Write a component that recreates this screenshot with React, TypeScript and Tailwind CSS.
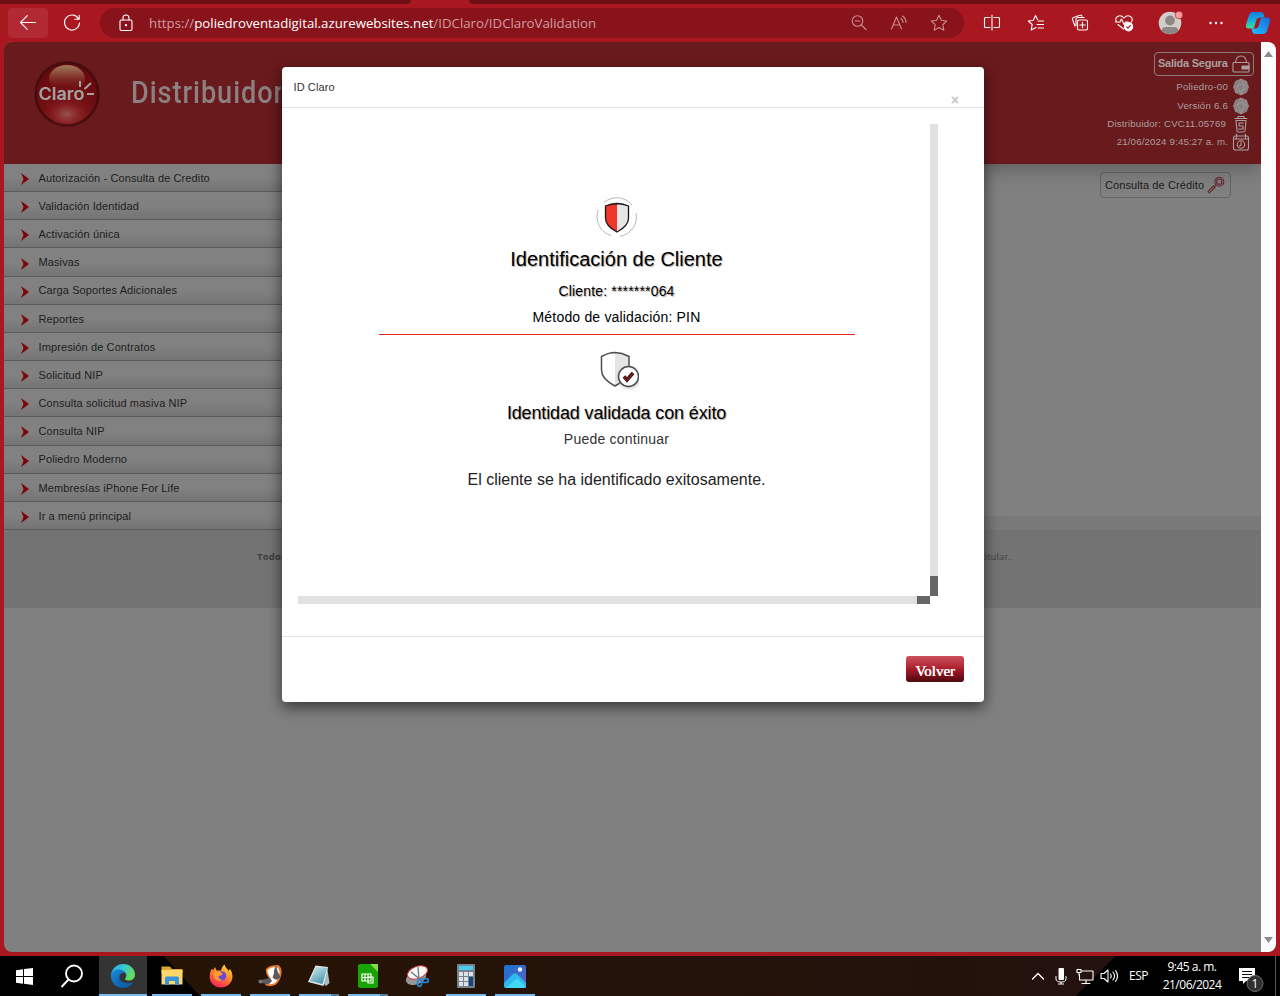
import React from "react";

const menu = [
  "Autorización - Consulta de Credito",
  "Validación Identidad",
  "Activación única",
  "Masivas",
  "Carga Soportes Adicionales",
  "Reportes",
  "Impresión de Contratos",
  "Solicitud NIP",
  "Consulta solicitud masiva NIP",
  "Consulta NIP",
  "Poliedro Moderno",
  "Membresías iPhone For Life",
  "Ir a menú principal",
];

type IconProps = { className?: string; children: React.ReactNode; box?: string };

function Line({ className = "", children, box = "0 0 20 20" }: IconProps) {
  return (
    <svg viewBox={box} fill="none" stroke="currentColor" strokeWidth="1.1" strokeLinecap="round" strokeLinejoin="round" className={`shrink-0 ${className}`}>
      {children}
    </svg>
  );
}

function TabStrip() {
  return (
    <div className="flex h-1 bg-[#a91720]">
      <div className="h-full w-[411px] rounded-br-[4px] bg-[#6e0f15]" />
      <div className="w-[58px]" />
      <div className="h-full flex-1 rounded-bl-[4px] bg-[#6e0f15]" />
    </div>
  );
}

function Toolbar() {
  return (
    <div className="flex h-[38px] items-start bg-[#a91720] pt-1 pl-2 text-white">
      <div className="flex h-[30px] w-10 items-center justify-center rounded bg-[#b12a33]">
        <Line className="size-5">
          <path d="M17.5 9.500H2.500M9.300 2.700L2.500 9.500L9.300 16.300" />
        </Line>
      </div>
      <div className="ml-[14px] flex h-[30px] w-5 items-center">
        <Line className="size-5">
          <path d="M16.400 5.600A7.500 7.500 0 1 0 17.500 10M17.200 2.300V6.300H12.800" />
        </Line>
      </div>
      <div className="ml-[18px] flex h-[30px] w-[864px] items-center rounded-full bg-[#89131b] pr-[15px] pl-4">
        <Line className="size-5">
          <rect x="4" y="7" width="12" height="10.500" rx="1.500" />
          <path d="M7 7V5a3 3 0 0 1 6 0v2" />
          <circle cx="10" cy="12.200" r=".6" fill="currentColor" />
        </Line>
        <div className="ml-[13px] flex-1 pt-px font-['Open_Sans',sans-serif] text-[13.250px] whitespace-nowrap text-[#cf9da1]">
          https://<span className="text-white">poliedroventadigital.azurewebsites.net</span>/IDClaro/IDClaroValidation
        </div>
        <div className="flex items-center gap-5 text-[#c78e92]">
          <Line className="size-5">
            <circle cx="8.500" cy="8" r="5.300" />
            <path d="M12.400 12L17 16.500M6 8h5" />
          </Line>
          <Line className="size-5">
            <path d="M2.500 16L7.500 4L12.500 16M4.200 12H10.800M12 5.500a5 5 0 0 1 2 4M13.500 3a8 8 0 0 1 3.500 6.500" />
          </Line>
          <Line className="size-5">
            <path d="M10 2.300l2.400 5 5.300.7-3.900 3.700 1 5.500L10 14.500l-4.800 2.700 1-5.500L2.300 8l5.300-.7z" />
          </Line>
        </div>
      </div>
      <div className="ml-[18px] flex h-[30px] flex-1 items-center">
        <Line className="size-5">
          <path d="M8 4.500H3.500a1 1 0 0 0-1 1v8a1 1 0 0 0 1 1H8M12 4.500h4.500a1 1 0 0 1 1 1v8a1 1 0 0 1-1 1H12M10 2v15" />
        </Line>
        <Line className="ml-6 size-5">
          <path d="M10 14.500L5.200 17l1-5.500L2.300 8l5-.7L9.500 2.500l2 4M12 8h5.500M11 11.500h6.500M12 15h5.500" />
        </Line>
        <Line className="ml-6 size-5">
          <path d="M5 13L2.500 6.500a1.500 1.500 0 0 1 1-2L10 2.300a1.500 1.500 0 0 1 2 1M6 12.500V6.500a2 2 0 0 1 2-2h6" />
          <rect x="7.500" y="7" width="10" height="10" rx="1.500" />
          <path d="M12.500 9.300v5.400M9.800 12h5.400" />
        </Line>
        <Line className="ml-6 size-5">
          <path d="M2.500 9C-.5 4 6 .5 10 5C14 .5 20.500 4 17.500 9M1.500 9H6l1.500-3L10 11.500 11.500 9H14M4 11.500L9.500 16" />
          <circle cx="14.500" cy="13.700" r="4.200" fill="white" />
          <path d="M12.600 13.800l1.300 1.300 2.500-2.600" stroke="#a91720" />
        </Line>
        <svg viewBox="0 0 26 26" className="ml-[23px] size-[26px] shrink-0">
          <circle cx="13" cy="13" r="11.300" fill="#d1cdca" />
          <circle cx="13" cy="10.500" r="4.900" fill="#8c8784" />
          <path d="M5 21q-.5-4 4-4h8q4.500 0 4 4a11.300 11.300 0 0 1-16 0" fill="#8c8784" />
          <circle cx="22" cy="5" r="3.800" fill="#ff9b9b" stroke="#a91720" strokeWidth=".6" />
        </svg>
        <Line className="ml-[23px] size-5">
          <g fill="currentColor" stroke="none">
            <circle cx="4.500" cy="10" r="1.200" />
            <circle cx="10" cy="10" r="1.200" />
            <circle cx="15.500" cy="10" r="1.200" />
          </g>
        </Line>
        <svg viewBox="0 0 26 26" className="ml-[19px] size-[26px] shrink-0">
          <defs>
            <linearGradient id="copA" x1="0" y1="0" x2="0" y2="1">
              <stop offset="0" stopColor="#1b79dc" />
              <stop offset=".55" stopColor="#12b4dd" />
              <stop offset="1" stopColor="#48dd91" />
            </linearGradient>
            <linearGradient id="copB" x1="1" y1="0" x2="0" y2="1">
              <stop offset="0" stopColor="#1769d8" />
              <stop offset="1" stopColor="#20c0ff" />
            </linearGradient>
          </defs>
          <path d="M8 2h8q2 0 2.600 2l1 3.500h-4q-2.400 0-3 2l-2 7q-.7 2-3 2H4q-4 0-3-4l3-9.500q1-3 4-3z" fill="url(#copA)" />
          <path d="M18 24h-8q-2 0-2.600-2l-1-3.500h4q2.400 0 3-2l2-7q.7-2 3-2H22q4 0 3 4l-3 9.500q-1 3-4 3z" fill="url(#copB)" />
          <path d="M11.500 9.500q.6-1.600 2.200-1.600h1.800L13 16.500q-.6 1.600-2.200 1.600H9z" fill="#a91720" />
        </svg>
      </div>
    </div>
  );
}

function ClaroLogo() {
  return (
    <svg viewBox="0 0 70 70" className="size-[70px] shrink-0">
      <defs>
        <radialGradient id="ballBase" cx=".5" cy=".92" r=".9">
          <stop offset="0" stopColor="#8e2326" />
          <stop offset=".5" stopColor="#710e12" />
          <stop offset="1" stopColor="#65090d" />
        </radialGradient>
        <linearGradient id="ballTop" x1="0" y1="0" x2="0" y2="1">
          <stop offset="0" stopColor="#9c7c59" />
          <stop offset=".35" stopColor="#8a4134" />
          <stop offset="1" stopColor="#740a15" stopOpacity="0" />
        </linearGradient>
        <radialGradient id="ballGlow">
          <stop offset="0" stopColor="#955454" />
          <stop offset="1" stopColor="#8a2020" stopOpacity="0" />
        </radialGradient>
      </defs>
      <circle cx="35" cy="35" r="33" fill="#360b0d" opacity=".5" />
      <circle cx="35" cy="35" r="31" fill="url(#ballBase)" stroke="#470b0e" strokeWidth="2" />
      <ellipse cx="35" cy="20" rx="18" ry="14" fill="url(#ballTop)" />
      <ellipse cx="35" cy="55" rx="20" ry="13" fill="url(#ballGlow)" />
      <text x="6.500" y="41" fontSize="17.500" fontWeight="600" fill="#a3a3a3" textLength="46" lengthAdjust="spacingAndGlyphs" className="font-['Inter',sans-serif]">Claro</text>
      <path d="M48 22v6M52.500 30l6.500-6M55 35h7" stroke="#a3a3a3" strokeWidth="2" />
    </svg>
  );
}

function Globe() {
  return (
    <svg viewBox="0 0 18 18" className="size-[18px] shrink-0" stroke="#a39c9c" strokeWidth=".6">
      <path d="M9 1l5.500 2.300L16.500 9l-2 5.500L9 17l-5.500-2.500L1.500 9l2-5.700z" fill="#857d7e" />
      <path d="M9 1L6 7l6 0zM6 7L3.500 14.500 12 12l2.500-8.700L6 7l3 10 3-5 4.500-3L12 7 9 17M1.500 9L6 7" fill="none" />
    </svg>
  );
}

function SessionInfo() {
  return (
    <div className="mt-[10px] mr-[7px] flex w-[200px] flex-col items-end font-['Liberation_Sans',Arial,sans-serif] text-[9.700px] text-[#a99f9f]">
      <div className="flex h-6 w-[100px] items-center rounded border border-[#8e7a7b] pl-[3px] font-bold whitespace-nowrap">
        <span className="w-[72px] pb-[2px] text-[11px] tracking-[-0.250px]">Salida Segura</span>
        <Line className="ml-[2px] size-[18px]" box="0 0 18 18">
          <rect x="1" y="7.500" width="16" height="9.500" rx="1" />
          <path d="M3.500 7.500Q4 1 9 1t5.500 6.500" />
          <path d="M10 11h7v3h-7z" fill="currentColor" />
        </Line>
      </div>
      <div className="mt-[2px] flex h-[18px] items-center gap-1 pr-[4px]">
        <span className="tracking-[0.200px]">Poliedro-00</span>
        <Globe />
      </div>
      <div className="mt-px flex h-[18px] items-center gap-1 pr-[4px]">
        <span className="tracking-[0.200px]">Versión 6.6</span>
        <Globe />
      </div>
      <div className="flex h-[18px] items-center gap-[6px] pr-[4px]">
        <span className="tracking-[0.170px]">Distribuidor: CVC11.05769</span>
        <Line className="size-[18px]" box="0 0 18 18">
          <path d="M3 3.500h12M6 3V1.500h6V3M4 5.500h10L13 16q-.2 1-1.500 1h-5Q5.200 17 5 16zM11.500 8H7v3h4v3H6.500" />
        </Line>
      </div>
      <div className="flex h-[18px] items-center gap-1 pr-[4px]">
        <span className="tracking-[0.150px]">21/06/2024 9:45:27 a. m.</span>
        <Line className="size-[18px]" box="0 0 18 18">
          <rect x="1.500" y="3" width="15" height="14" rx="2" />
          <path d="M4.500 1v4M13.500 1v4M2 6h14M9 9v3l-1.500 1" />
          <circle cx="9" cy="11.500" r="3.700" />
        </Line>
      </div>
    </div>
  );
}

function Page() {
  return (
    <div className="flex w-[1257px] flex-col overflow-hidden rounded-l-lg bg-[#808080] font-['Liberation_Sans',Arial,sans-serif]">
      <div className="relative z-10 flex h-[122px] shrink-0 items-start bg-[#691a1c] shadow-[0_2px_22px_rgba(0,0,0,0.35)]">
        <div className="pt-[17px] pl-7">
          <ClaroLogo />
        </div>
        <div className="mt-[31px] ml-[29px] w-[171px] origin-left scale-x-[.875] overflow-hidden font-['Roboto',sans-serif] text-[31px] leading-10 font-medium tracking-[1.100px] whitespace-nowrap text-[#8c8080]">Distribuidor</div>
        <div className="flex-1" />
        <SessionInfo />
      </div>
      <div className="flex h-[366px] shrink-0">
        <div className="relative z-10 grid w-[300px] grid-rows-13">
          {menu.map((m) => (
            <div key={m} className="flex items-center border-b border-[#5b5b5b] bg-linear-to-b from-[#818181] from-50% to-[#747474] pl-[17px] text-[11px] text-[#1d1d20]">
              <svg viewBox="0 0 8 12" className="mt-[3px] mr-[9.500px] h-3 w-2 shrink-0">
                <path d="M0 0L8 6L0 12L2.500 6z" fill="#7a0609" />
              </svg>
              <span className="pt-px tracking-[0.110px] whitespace-nowrap">{m}</span>
            </div>
          ))}
        </div>
        <div className="flex flex-1 flex-col justify-between">
          <div className="flex justify-end pt-2 pr-[30px]">
            <div className="flex h-[26px] w-[131px] items-center rounded border border-[#646464] pl-1 text-[11px] whitespace-nowrap text-[#1c1c1c]">
              <span className="w-[100px] tracking-[0.100px]">Consulta de Crédito</span>
              <Line className="ml-[2px] size-[18px] text-[#66262c]" box="0 0 18 18">
                <circle cx="12.300" cy="5.700" r="4.500" />
                <circle cx="12.300" cy="5.700" r="2.700" />
                <path d="M9 9L7.500 10.500M6.500 10L1 15.300l1.300 1.500L8 11.500z" />
              </Line>
            </div>
          </div>
          <div className="h-[14px] bg-[#797979]" />
        </div>
      </div>
      <div className="flex h-[78px] shrink-0 justify-between bg-[#737373] pt-5 pr-[250px] pl-[253px] font-['Open_Sans',sans-serif] text-[9.500px] leading-[14px] text-[#404040]">
        <span className="w-[25px] overflow-hidden font-bold tracking-[0.200px]">Todos</span>
        <span className="tracking-[0.100px]">titular.</span>
      </div>
    </div>
  );
}

function PageScrollbar() {
  return (
    <div className="flex w-[15px] flex-col items-center justify-between rounded-r-lg bg-[#fcfcfc] py-[9px]">
      <svg viewBox="0 0 9 6" className="h-[6px] w-[9px]"><path d="M0 6L4.500 0L9 6z" fill="#8b8b8b" /></svg>
      <svg viewBox="0 0 9 6" className="h-[6px] w-[9px]"><path d="M0 0L4.500 6L9 0z" fill="#8b8b8b" /></svg>
    </div>
  );
}

function ShieldHalf() {
  return (
    <svg viewBox="0 0 42 42" className="size-[42px] shrink-0">
      <g fill="none" stroke="#b8b8b8" strokeWidth="1">
        <path d="M8 6.500A19.500 19.500 0 0 1 36 9M2.200 14A19.500 19.500 0 0 0 15 39.500M24 40.300A19.500 19.500 0 0 0 40 17" />
      </g>
      <path d="M21 7.500Q15 7.600 9.500 10V22Q9.500 30 21 36z" fill="#ef382a" />
      <path d="M21 7.500Q27 7.600 32.500 10V22Q32.500 30 21 36z" fill="#e6e6e6" />
      <path d="M21 7.500Q15 7.600 9.500 10V22Q9.500 30 21 36Q32.500 30 32.500 22V10Q27 7.600 21 7.500z" fill="none" stroke="#151515" strokeWidth="1.300" />
    </svg>
  );
}

function ShieldCheck() {
  return (
    <svg viewBox="0 0 42 42" className="size-[42px] shrink-0">
      <defs>
        <filter id="soft" x="-30%" y="-30%" width="160%" height="160%"><feGaussianBlur stdDeviation="1.500" /></filter>
      </defs>
      <path d="M18 3.500Q25 3.700 32 7.500V20Q31 30 18 37z" fill="#e5e5e5" />
      <path d="M18 3.500Q11 3.700 4.500 7.500V21Q4.500 30 18 37Q32 30 32 20V7.500Q25 3.700 18 3.500z" fill="none" stroke="#4d4d4d" strokeWidth="1.500" />
      <circle cx="32" cy="28.500" r="11" fill="#999" opacity=".5" filter="url(#soft)" />
      <circle cx="31.500" cy="27.500" r="10" fill="#fff" stroke="#4d4d4d" strokeWidth="1.500" />
      <path d="M27 27.500l3 3.500 6-7" fill="none" stroke="#222" strokeWidth="3.600" />
      <path d="M27 27.500l3 3.500 6-7" fill="none" stroke="#7e1518" strokeWidth="2" />
    </svg>
  );
}

function Dialog() {
  return (
    <div className="absolute top-[67px] left-[282px] z-20 flex h-[635px] w-[702px] flex-col rounded bg-white font-['Liberation_Sans',Arial,sans-serif] shadow-[0_5px_15px_rgba(0,0,0,0.6)]">
      <div className="flex h-[41px] shrink-0 justify-between border-b border-[#e3e3e3] pr-[25px] pl-[11.500px]">
        <span className="pt-3 text-[11px] leading-4 tracking-[0.100px] text-[#333]">ID Claro</span>
        <span className="pt-[25px] text-[14px] leading-4 font-bold text-[#c6c6c6]">×</span>
      </div>
      <div className="mt-4 ml-4 grid h-[480px] w-[640px] shrink-0 grid-cols-[632px_8px] grid-rows-[472px_8px] self-start">
        <div className="flex flex-col items-center overflow-hidden pt-[72px] pl-[5px] text-center text-black">
          <ShieldHalf />
          <div className="mt-[7px] text-[20px] leading-7 [text-shadow:1px_1px_1px_#aaa]">Identificación de Cliente</div>
          <div className="mt-[8px] text-[14px] leading-5 tracking-[0.170px] [text-shadow:1px_1px_1px_#aaa]">Cliente: *******064</div>
          <div className="mt-[6px] text-[14px] leading-5 tracking-[0.180px]">Método de validación: PIN</div>
          <div className="mt-[7px] h-px w-[476px] shrink-0 bg-[#da291c]" />
          <div className="mt-[14px] ml-[2px]"><ShieldCheck /></div>
          <div className="mt-[10px] text-[18px] leading-6 tracking-[-0.140px] [text-shadow:1px_1px_1px_#aaa]">Identidad validada con éxito</div>
          <div className="mt-1 text-[14px] leading-5 tracking-[0.220px] text-[#333]">Puede continuar</div>
          <div className="mt-[21px] text-[16px] leading-5 text-[#222]">El cliente se ha identificado exitosamente.</div>
        </div>
        <div className="flex flex-col justify-end bg-[#e1e1e1]">
          <div className="h-5 bg-[#666]" />
        </div>
        <div className="flex justify-end bg-[#e1e1e1]">
          <div className="w-[13px] bg-[#666]" />
        </div>
      </div>
      <div className="mt-8 flex justify-end border-t border-[#e3e3e3] pt-[19px] pr-5">
        <button className="h-[26px] w-[58px] rounded-[3px] bg-linear-to-b from-[#cb515e] via-[#ab1b2a] to-[#4f080e] pt-[3px] font-['Liberation_Serif',serif] text-[15px] leading-5 text-white [text-shadow:0.5px_0_0_#fff]">Volver</button>
      </div>
    </div>
  );
}

function TaskSlot({ children, stacked = false, closed = false }: { children: React.ReactNode; stacked?: boolean; closed?: boolean }) {
  return (
    <div className="flex h-10 w-[49px] flex-col items-center justify-between pt-2">
      <svg viewBox="0 0 24 24" className="size-6">{children}</svg>
      {closed ? <div className="h-[2px]" /> : (
        <div className="flex h-[2px] w-10 justify-end bg-[#76b9ed]">{stacked && <div className="w-2 bg-[#527fa2]" />}</div>
      )}
    </div>
  );
}

function Taskbar() {
  return (
    <div className="flex h-10 items-center bg-[linear-gradient(48deg,#000_0,#000_148px,transparent_149px),linear-gradient(135deg,transparent_0,transparent_calc(100%_-_145px),#000_calc(100%_-_144px)),linear-gradient(90deg,#261403,#22110f)] text-white">
      <svg viewBox="0 0 17 17" className="ml-4 size-[17px] shrink-0" fill="white">
        <path d="M0 2.300L7 1.300V8H0zM8 1.100L17 0v8H8zM0 9h7v6.700L0 14.700zM8 9h9v8l-9-1.200z" />
      </svg>
      <svg viewBox="0 0 24 24" className="ml-[27px] size-6 shrink-0" fill="none" stroke="white" strokeWidth="1.900">
        <circle cx="14" cy="9.500" r="8" /><path d="M8.500 15.500L1.500 23" />
      </svg>
      <div className="ml-[15px] flex h-10 w-12 flex-col items-center justify-between bg-[#343434] pt-2">
        <svg viewBox="0 0 24 24" className="size-6">
          <defs>
            <linearGradient id="edgeTop" x1="0" y1="0" x2="1" y2=".4">
              <stop offset="0" stopColor="#28a7e7" /><stop offset=".5" stopColor="#32c6d8" /><stop offset="1" stopColor="#66dc5c" />
            </linearGradient>
            <linearGradient id="edgeLow" x1="0" y1="0" x2="1" y2="1">
              <stop offset="0" stopColor="#1b8bdd" /><stop offset="1" stopColor="#0c4c93" />
            </linearGradient>
          </defs>
          <path d="M0 11C1 4 6 0 12 0c7 0 12 5 12 10.500 0 4-3 6-6 6-3.500 0-4.500-1.500-3.500-2.500C17 11 14 6.500 9 6.500c-5 0-8 2.500-9 4.500z" fill="url(#edgeTop)" />
          <path d="M0 12c0-4 4-6.500 8-6.500 3 0 5.500 1.500 6.500 3.500C10 7.500 8 11 8.500 14c.7 4.500 6.500 7 13.500 4-2 3.500-5.500 6-10 6C5 24 0 19 0 12z" fill="url(#edgeLow)" />
          <path d="M9.500 9.500C5 13 7 22 15 23.500 18 23 21 20.500 22 18c-6 3-13 0-13.500-4-.2-1.700.2-3.200 1-4.500z" fill="#1360ad" />
        </svg>
        <div className="h-[2px] w-full bg-[#76b9ed]" />
      </div>
      <TaskSlot>
        <path d="M1.500 2.500h8.500l2 2.500h10.500v4h-21z" fill="#dda52d" /><path d="M1.500 6h21v14.500h-21z" fill="#ffd768" />
        <path d="M5 21v-7q0-1.500 1.500-1.500h11q1.500 0 1.500 1.500v7h-4v-4H9v4z" fill="#3a94dc" />
      </TaskSlot>
      <TaskSlot>
        <defs>
          <linearGradient id="fox" x1=".8" y1="0" x2=".3" y2="1">
            <stop offset="0" stopColor="#ffe03d" /><stop offset=".45" stopColor="#ff8a2b" /><stop offset="1" stopColor="#f5205d" />
          </linearGradient>
        </defs>
        <path d="M12 23.500C5 23.500.500 18.500.700 12.500.900 8 2 6 3 4.500l1 2L6 3l1.500 3.500L11 6.500q0 0 1 0c.5-2 1.500-4.500 3.500-6 .5 3 3 4 4 6.500l1.500-2c1.500 2 2.500 5 2.500 7.500 0 6.500-5.500 11-11.500 11z" fill="url(#fox)" />
        <circle cx="12.500" cy="12" r="4.800" fill="#7048d6" /><path d="M4 9.500q4-3.500 7.500-1.500L14 10q-2 2-4.500 2 0 3.500 4 4-5 2.500-8-2z" fill="#ff9a2c" />
      </TaskSlot>
      <TaskSlot>
        <path d="M8 5q3-4 12-4 4 2 3.500 8-.5 7-5.500 11.500-6 3-11 .5l4-7Q7 9 8 5z" fill="#ed7a23" />
        <path d="M9.500 6q3-3 9-3 3.500 2 3 6.500Q21 15 17 19q-4 2-8 1l3.500-6Q9 9 9.500 6z" fill="#fff" />
        <path d="M18 1l1.500 6 3 6q-3 4-6 2l-2-1.500q2-4 1.500-7zM3 16l9-2 2 3-3.500 3.500L4 19z" fill="#5c5a5a" /><circle cx="2.500" cy="17.500" r="2" fill="#777" />
      </TaskSlot>
      <TaskSlot stacked>
        <defs><linearGradient id="note" x1="0" y1="0" x2=".6" y2="1"><stop offset="0" stopColor="#d6eef0" /><stop offset="1" stopColor="#4a98ad" /></linearGradient></defs>
        <path d="M20 3l2.500 16-3.500 3-3-3z" fill="#a9bcc0" /><path d="M8.500 1.500L21 3l-4.500 19L1 18z" fill="#dde5e6" /><path d="M9 3l11 1-4.500 16L3 17z" fill="url(#note)" />
      </TaskSlot>
      <TaskSlot stacked>
        <path d="M2 2q0-2 2-2h11l7 7v15q0 2-2 2H4q-2 0-2-2z" fill="#18a303" /><path d="M14 0h8v8z" fill="#83dc3b" />
        <path d="M6 10h9v7H6zM6 13.500h9M9 10v7M12 10v7M12 13h5v6h-5z" fill="none" stroke="#fff" strokeWidth="1.200" />
      </TaskSlot>
      <TaskSlot closed>
        <ellipse cx="11" cy="14" rx="10.500" ry="6.500" fill="#93989c" transform="rotate(-20 11 14)" />
        <ellipse cx="12.500" cy="8.500" rx="10.500" ry="6" fill="#f6f6f6" stroke="#cf3b37" transform="rotate(-20 12.500 8.500)" />
        <path d="M6 8l10 8M13 3l1 13" stroke="#687784" strokeWidth="1.300" /><g fill="none" stroke="#2786ce" strokeWidth="1.700"><ellipse cx="14.500" cy="19" rx="2" ry="3.500" /><ellipse cx="20" cy="16.500" rx="3.500" ry="2" /></g>
      </TaskSlot>
      <TaskSlot>
        <rect x="3" width="18" height="24" rx="1" fill="#75838e" /><path d="M5 2h14v4H5z" fill="#4bcaf4" />
        <path d="M5 8h4v4H5zM10 8h4v4h-4zM15 8h4v4h-4zM5 13h4v4H5zM10 13h4v4h-4zM5 18h4v4H5zM10 18h4v4h-4z" fill="#dce2e7" /><path d="M15 13h4v9h-4z" fill="#174879" />
      </TaskSlot>
      <TaskSlot>
        <defs><linearGradient id="photo" x1="0" y1="0" x2="1" y2="1"><stop offset="0" stopColor="#1872d5" /><stop offset="1" stopColor="#6160bd" /></linearGradient></defs>
        <rect x="1" y="1" width="22" height="23" rx="2" fill="url(#photo)" /><path d="M1 19l9-9q2-1.500 4 0l9 9v3q0 2-2 2H3q-2 0-2-2z" fill="#2eb9ef" />
        <path d="M3 24l10-9q1-1 2 0l8 8-2 1z" fill="#45d6f7" /><circle cx="17" cy="5.500" r="2.200" fill="#eef4ff" />
      </TaskSlot>
      <div className="flex-1" />
      <Line className="size-[14px]" box="0 0 14 14"><path d="M1.500 10L7 4.500 12.500 10" strokeWidth="1.400" /></Line>
      <svg viewBox="0 0 12 18" className="ml-[10px] h-[18px] w-3 shrink-0" fill="white"><rect x="3.500" y="1" width="5.500" height="12" rx="1" /><path d="M1 9v3q0 3 5 3t5-3V9M6 15v2M3 17h6" fill="none" stroke="white" /></svg>
      <Line className="ml-[9px] size-[18px]" box="0 0 18 18"><path d="M5.500 4H17v9H3.500V7.500M10 13v3M6 16.500h8M1 2.500h4v3H1zM3 5.500V8" /></Line>
      <Line className="ml-[6px] size-[18px]" box="0 0 18 18"><path d="M1 6.500h3L8 3v12l-4-3.500H1zM10.500 7q1.500 2 0 4M13 5q3 4 0 8M15.500 3.500q4 5.500 0 11" /></Line>
      <span className="ml-[11px] w-5 font-['Open_Sans',sans-serif] text-[12px] tracking-[-0.450px]">ESP</span>
      <div className="ml-[11px] w-[64px] text-center font-['Open_Sans',sans-serif] text-[12px] leading-[18px] tracking-[-0.500px] whitespace-nowrap">
        <div>9:45 a. m.</div><div>21/06/2024</div>
      </div>
      <svg viewBox="0 0 26 26" className="mt-2 ml-[14px] size-[26px] shrink-0">
        <path d="M1 1h16v13H8l-3 3v-3H1z" fill="#fff" /><path d="M4 4.500h10M4 7.500h10M4 10.500h7" stroke="#111" strokeWidth="1.200" />
        <circle cx="17" cy="16.500" r="8" fill="#303030" stroke="#6d6d6d" />
        <text x="17" y="21" fontSize="12" fill="#fff" textAnchor="middle" className="font-['Open_Sans',sans-serif]">1</text>
      </svg>
      <div className="ml-[11px] h-full w-px bg-[#555]" />
      <div className="w-1" />
    </div>
  );
}

export default function App() {
  return (
    <div className="relative flex h-[996px] w-[1280px] flex-col overflow-hidden bg-[#a91720]">
      <TabStrip />
      <Toolbar />
      <div className="mb-1 flex h-[910px] shrink-0 px-1">
        <Page />
        <PageScrollbar />
      </div>
      <Taskbar />
      <Dialog />
    </div>
  );
}
